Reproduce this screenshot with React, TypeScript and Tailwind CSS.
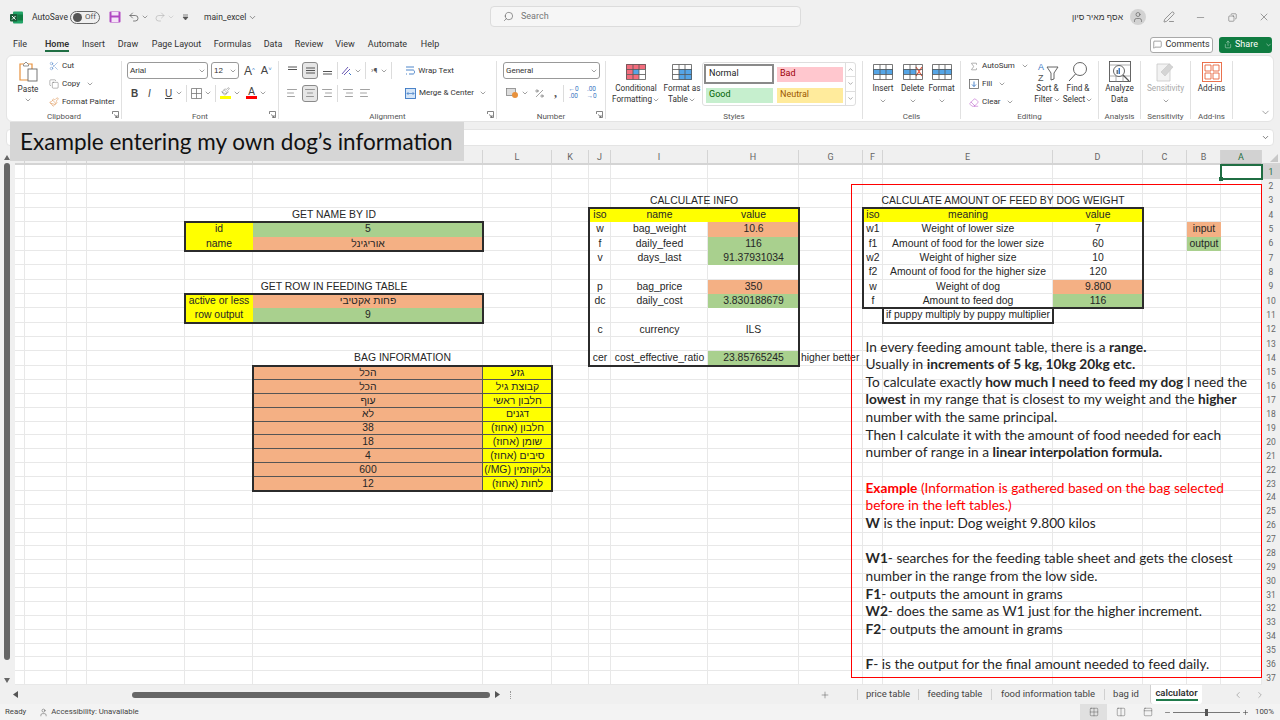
import React from 'react'
import {
  ChevronDown,
  ChevronLeft,
  ChevronRight,
  ChevronUp,
  Minus,
  X,
  Search,
  User,
  Scissors,
  Copy,
  Paintbrush,
  Undo2,
  Redo2,
  MessageSquare,
  Share,
  Plus,
  AlignLeft,
  AlignCenter,
  AlignRight,
  Sigma,
  Eraser,
  Percent,
  Grid2x2,
  Columns2,
  PanelTop,
  PenLine,
} from 'lucide-react'

const Chev = ({ className = '' }: { className?: string }) => (
  <ChevronDown size={8} strokeWidth={1.5} className={`text-[#444] shrink-0 ${className}`} />
)

const Sep = ({ className = '' }: { className?: string }) => (
  <div className={`w-px h-[17px] bg-[#dcdcdc] shrink-0 ${className}`} />
)

function Launcher() {
  return (
    <svg width="7" height="7" viewBox="0 0 7 7" className="absolute right-[3px] bottom-[3px] text-[#666]">
      <path d="M.5 3V.5H6.5V6.5H3.5M2 3.5L5 6M5 4V6H3" fill="none" stroke="currentColor" strokeWidth=".8" />
    </svg>
  )
}

function Group({
  w,
  label,
  launcher,
  children,
}: {
  w: string
  label: string
  launcher?: boolean
  children: React.ReactNode
}) {
  return (
    <div className={`relative flex flex-col shrink-0 h-full ${w}`}>
      <div className="flex-1 min-h-0 border-r border-[#e1e1e1] mb-[2px]">
        <div className="flex flex-col h-[50px] relative">{children}</div>
        <div className="text-center text-[8px] leading-[11px] text-[#555]">{label}</div>
      </div>
      {launcher && <Launcher />}
    </div>
  )
}

function BigBtn({
  w,
  icon,
  lines,
  chev,
  gray,
}: {
  w: string
  icon: React.ReactNode
  lines: string[]
  chev?: boolean
  gray?: boolean
}) {
  return (
    <div className={`flex flex-col items-center shrink-0 ${w} ${gray ? 'text-[#aaa]' : 'text-[#333]'}`}>
      <div className="h-[22px] flex items-center justify-center">{icon}</div>
      {lines.map((l, i) => (
        <div key={l} className="flex items-center leading-[11px] text-[8.2px] whitespace-nowrap">
          {l}
          {chev && i === lines.length - 1 && lines.length === 2 && <Chev />}
        </div>
      ))}
      {chev && lines.length === 1 && <Chev className="mt-[3px]" />}
    </div>
  )
}

const Vert = ({ ys, sel }: { ys: number[]; sel?: boolean }) => (
  <div className={`w-[16px] h-[17px] flex items-center justify-center shrink-0 rounded-[3px] ${sel ? 'border border-[#8a8a8a] bg-[#e6e6e6]' : ''}`}>
    <svg width="11" height="11" viewBox="0 0 11 11">
      {ys.map((y) => (
        <path key={y} d={`M1 ${y}H10`} stroke="#555" strokeWidth="1" />
      ))}
    </svg>
  </div>
)

const Horz = ({ Icon, sel }: { Icon: typeof AlignLeft; sel?: boolean }) => (
  <div className={`w-[16px] h-[17px] flex items-center justify-center shrink-0 rounded-[3px] ${sel ? 'border border-[#8a8a8a] bg-[#e6e6e6]' : ''}`}>
    <Icon size={12} strokeWidth={1} className="text-[#444]" />
  </div>
)

function TableIcon({ children }: { children?: React.ReactNode }) {
  return (
    <svg width="20" height="16" viewBox="0 0 20 16">
      {children}
      <path d="M.5.5H19.5V15.5H.5ZM.5 5.5H19.5M.5 10.5H19.5M7 .5V15.5M13 .5V15.5" fill="none" stroke="#555" strokeWidth=".8" />
    </svg>
  )
}

const cols = [10, 42.5, 20, 98, 68, 230, 69, 37, 22, 97, 91, 64, 20, 170, 90, 44, 34, 41]
const colNames = ['R', 'Q', 'P', 'O', 'N', 'M', 'L', 'K', 'J', 'I', 'H', 'G', 'F', 'E', 'D', 'C', 'B', 'A']
const rowNums = Array.from({ length: 37 }, (_, i) => i + 1)

const yellow = 'bg-[#ffff00]'
const orange = 'bg-[#f4b084]'
const green = 'bg-[#a9d08e]'

// c and r are 1-based sheet positions, the header row takes grid line 1
function Cell({
  c,
  r,
  span = 1,
  bg = '',
  children,
  dir,
}: {
  c: number
  r: number
  span?: number
  bg?: string
  children?: React.ReactNode
  dir?: 'rtl'
}) {
  return (
    <div
      dir={dir}
      className={`flex items-center justify-center whitespace-nowrap font-['Liberation_Sans',sans-serif] text-[10.4px] leading-none text-[#262626] ${bg}`}
      style={{ gridColumn: `${c} / span ${span}`, gridRow: r + 1 }}
    >
      {children}
    </div>
  )
}

function Frame({ c, r, spanC, spanR }: { c: number; r: number; spanC: number; spanR: number }) {
  return (
    <div
      className="border-2 border-[#2b2b2b] -m-px pointer-events-none z-10"
      style={{ gridColumn: `${c} / span ${spanC}`, gridRow: `${r + 1} / span ${spanR}` }}
    />
  )
}

const bagRows: [string, string][] = [
  ['הכל', 'גזע'],
  ['הכל', 'קבוצת גיל'],
  ['עוף', 'חלבון ראשי'],
  ['לא', 'דגנים'],
  ['38', 'חלבון (אחוז)'],
  ['18', 'שומן (אחוז)'],
  ['4', 'סיבים (אחוז)'],
  ['600', 'גלוקוזמין (MG/)'],
  ['12', 'לחות (אחוז)'],
]

const infoRows: [number, string, string, string, string][] = [
  [5, 'w', 'bag_weight', '10.6', orange],
  [6, 'f', 'daily_feed', '116', green],
  [7, 'v', 'days_last', '91.37931034', green],
  [9, 'p', 'bag_price', '350', orange],
  [10, 'dc', 'daily_cost', '3.830188679', green],
  [12, 'c', 'currency', 'ILS', ''],
  [14, 'cer', 'cost_effective_ratio', '23.85765245', green],
]

const feedRows: [number, string, string, string, string][] = [
  [5, 'w1', 'Weight of lower size', '7', ''],
  [6, 'f1', 'Amount of food for the lower size', '60', ''],
  [7, 'w2', 'Weight of higher size', '10', ''],
  [8, 'f2', 'Amount of food for the higher size', '120', ''],
  [9, 'w', 'Weight of dog', '9.800', orange],
  [10, 'f', 'Amount to feed dog', '116', green],
]

function Sheet() {
  return (
    <div className="grid grid-cols-[10px_42.5px_20px_98px_68px_230px_69px_37px_22px_97px_91px_64px_20px_170px_90px_44px_34px_41px_18px] grid-rows-[15px_repeat(15,14.33px)_repeat(22,13.88px)] flex-1 relative">
      {colNames.map((n, i) => (
        <div
          key={n}
          className={`flex items-center justify-center pt-[2px] text-[9px] leading-none border-b-2 border-r border-[#d4d4d4] ${n === 'A' ? 'bg-[#d2d2d2] text-[#1f6e43] border-b-[#b5b5b5]' : 'text-[#666]'}`}
          style={{ gridColumn: i + 1, gridRow: 1 }}
        >
          {n}
        </div>
      ))}
      <div className="border-b-2 border-[#d4d4d4] flex items-end justify-end pr-[2px]" style={{ gridColumn: 19, gridRow: 1 }}>
        <div className="w-0 h-0 border-l-[8px] border-l-transparent border-b-[8px] border-b-[#c8c8c8] mb-[1px]" />
      </div>
      {rowNums.map((r) =>
        cols.map((_, c) => (
          <div key={`${r}-${c}`} className="border-r border-b border-[#e8e8e8] bg-white" style={{ gridColumn: c + 1, gridRow: r + 1 }} />
        )),
      )}
      {rowNums.map((r) => (
        <div
          key={r}
          className={`flex items-center justify-center text-[8.5px] ${r === 1 ? 'bg-[#d2d2d2] text-[#1f6e43]' : 'text-[#666]'}`}
          style={{ gridColumn: 19, gridRow: r + 1 }}
        >
          {r}
        </div>
      ))}

      <Cell c={5} r={4} span={2}>GET NAME BY ID</Cell>
      <Cell c={5} r={5} bg={yellow}>id</Cell>
      <Cell c={6} r={5} bg={green}>5</Cell>
      <Cell c={5} r={6} bg={yellow}>name</Cell>
      <Cell c={6} r={6} bg={orange} dir="rtl">אוריגינל</Cell>
      <Frame c={5} r={5} spanC={2} spanR={2} />

      <Cell c={5} r={9} span={2}>GET ROW IN FEEDING TABLE</Cell>
      <Cell c={5} r={10} bg={yellow}>active or less</Cell>
      <Cell c={6} r={10} bg={orange} dir="rtl">פחות אקטיבי</Cell>
      <Cell c={5} r={11} bg={yellow}>row output</Cell>
      <Cell c={6} r={11} bg={green}>9</Cell>
      <Frame c={5} r={10} spanC={2} spanR={2} />

      <Cell c={6} r={14} span={2}>BAG INFORMATION</Cell>
      {bagRows.map(([v, k], i) => (
        <React.Fragment key={k}>
          <Cell c={6} r={15 + i} bg={orange} dir="rtl">{v}</Cell>
          <Cell c={7} r={15 + i} bg={yellow} dir="rtl">{k}</Cell>
          <div className="border-b border-[#555]" style={{ gridColumn: '6 / span 2', gridRow: 16 + i }} />
        </React.Fragment>
      ))}
      <div className="border-r border-[#555]" style={{ gridColumn: 6, gridRow: '16 / span 9' }} />
      <Frame c={6} r={15} spanC={2} spanR={9} />

      <Cell c={9} r={3} span={3}>CALCULATE INFO</Cell>
      <Cell c={9} r={4} bg={yellow}>iso</Cell>
      <Cell c={10} r={4} bg={yellow}>name</Cell>
      <Cell c={11} r={4} bg={yellow}>value</Cell>
      {infoRows.map(([r, iso, name, val, bg]) => (
        <React.Fragment key={name}>
          <Cell c={9} r={r}>{iso}</Cell>
          <Cell c={10} r={r}>{name}</Cell>
          <Cell c={11} r={r} bg={bg}>{val}</Cell>
        </React.Fragment>
      ))}
      <Frame c={9} r={4} spanC={3} spanR={11} />
      <Cell c={12} r={14} span={2}>
        <span className="w-full pl-[2px]">higher better</span>
      </Cell>

      <Cell c={13} r={3} span={3}>CALCULATE AMOUNT OF FEED BY DOG WEIGHT</Cell>
      <Cell c={13} r={4} bg={yellow}>iso</Cell>
      <Cell c={14} r={4} bg={yellow}>meaning</Cell>
      <Cell c={15} r={4} bg={yellow}>value</Cell>
      {feedRows.map(([r, iso, m, val, bg]) => (
        <React.Fragment key={m}>
          <Cell c={13} r={r}>{iso}</Cell>
          <Cell c={14} r={r}>{m}</Cell>
          <Cell c={15} r={r} bg={bg}>{val}</Cell>
        </React.Fragment>
      ))}
      <Frame c={13} r={4} spanC={3} spanR={7} />
      <Cell c={14} r={11}>if puppy multiply by puppy multiplier</Cell>
      <Frame c={14} r={11} spanC={1} spanR={1} />

      <Cell c={17} r={5} bg={orange}>input</Cell>
      <Cell c={17} r={6} bg={green}>output</Cell>

      <div className="border-2 border-[#1f6e43] -m-px relative z-10" style={{ gridColumn: 18, gridRow: 2 }}>
        <div className="absolute -left-[3px] -bottom-[3px] w-[4px] h-[4px] bg-[#1f6e43]" />
      </div>
    </div>
  )
}

const B = ({ children }: { children: React.ReactNode }) => <b className="font-bold">{children}</b>

function Notes() {
  return (
    <div className="absolute left-[850.5px] top-[184px] w-[411px] h-[493.5px] border border-[#ff0000] pl-[14px] pt-[152.5px] font-['Lato',sans-serif] text-[13.7px] leading-[17.65px] text-[#262626] whitespace-nowrap z-20">
      <div>In every feeding amount table, there is a <B>range.</B></div>
      <div>Usually in <B>increments of 5 kg, 10kg 20kg etc.</B></div>
      <div>To calculate exactly <B>how much I need to feed my dog</B> I need the</div>
      <div><B>lowest</B> in my range that is closest to my weight and the <B>higher</B></div>
      <div>number with the same principal.</div>
      <div>Then I calculate it with the amount of food needed for each</div>
      <div>number of range in a <B>linear interpolation formula.</B></div>
      <div className="h-[17.65px]" />
      <div className="text-[#ff0000]"><B>Example</B> (Information is gathered based on the bag selected</div>
      <div className="text-[#ff0000]">before in the left tables.)</div>
      <div><B>W</B> is the input: Dog weight 9.800 kilos</div>
      <div className="h-[17.65px]" />
      <div><B>W1</B>- searches for the feeding table sheet and gets the closest</div>
      <div>number in the range from the low side.</div>
      <div><B>F1</B>- outputs the amount in grams</div>
      <div><B>W2</B>- does the same as W1 just for the higher increment.</div>
      <div><B>F2</B>- outputs the amount in grams</div>
      <div className="h-[17.65px]" />
      <div><B>F</B>- is the output for the final amount needed to feed daily.</div>
    </div>
  )
}

const menus = [
  ['File', 'w-[12px] mr-[5px]'],
  ['Home', 'w-[24px]'],
  ['Insert', 'w-[21px]'],
  ['Draw', 'w-[20px]'],
  ['Page Layout', 'w-[47px] ml-[1px]'],
  ['Formulas', 'w-[35px] ml-[1px]'],
  ['Data', 'w-[18px]'],
  ['Review', 'w-[26px]'],
  ['View', 'w-[18px]'],
  ['Automate', 'w-[37px] ml-[1px]'],
  ['Help', 'w-[18px] ml-[1px]'],
]

function TitleBar() {
  return (
    <div className="h-[34px] flex items-center text-[8.5px] text-[#333] shrink-0 relative">
      <svg width="13" height="13" viewBox="0 0 13 13" className="ml-[10px]">
        <rect x="3" y="0.5" width="10" height="12" rx="1" fill="#21a366" />
        <rect x="8" y="3.5" width="5" height="6" fill="#107c41" />
        <rect x="0" y="3" width="7.5" height="7.5" rx="1" fill="#185c37" />
        <path d="M2 5L5.5 8.6M5.5 5L2 8.6" stroke="#fff" strokeWidth="1" />
      </svg>
      <span className="ml-[9px] w-[34px] whitespace-nowrap">AutoSave</span>
      <div className="ml-[4px] w-[30px] h-[13px] rounded-full border border-[#666] flex items-center pl-[2px] gap-[3px]">
        <div className="w-[9px] h-[9px] rounded-full bg-[#555]" />
        <span className="text-[8px] leading-none text-[#555]">Off</span>
      </div>
      <svg width="12" height="12" viewBox="0 0 12 12" className="ml-[9px]">
        <rect x=".5" y=".5" width="11" height="11" rx="1" fill="#b146c2" />
        <rect x="2.5" y="1" width="7" height="3.5" fill="#f4e3f7" />
        <rect x="2.5" y="6.5" width="7" height="4.5" fill="#f4e3f7" />
      </svg>
      <Undo2 size={12} strokeWidth={1.3} className="ml-[7px] text-[#444]" />
      <Chev className="ml-[1px]" />
      <Redo2 size={12} strokeWidth={1.3} className="ml-[5px] text-[#b5b5b5]" />
      <ChevronDown size={8} strokeWidth={1.5} className="ml-[1px] text-[#bbb]" />
      <svg width="7" height="7" viewBox="0 0 7 7" className="ml-[7px]">
        <path d="M1 1H6M1 3L3.5 6L6 3Z" fill="#555" stroke="#555" strokeWidth=".7" />
      </svg>
      <span className="ml-[15px] whitespace-nowrap">main_excel</span>
      <ChevronDown size={9} strokeWidth={1.5} className="ml-[2px] text-[#444]" />
      <div className="absolute left-[490px] top-[6px] w-[311px] h-[21px] rounded-[4px] bg-[#f6f6f6] border border-[#dcdcdc] flex items-center pl-[12px] gap-[7px] text-[9px] text-[#777]">
        <Search size={11} strokeWidth={1.3} className="text-[#555] -scale-x-100" />
        Search
      </div>
      <div className="ml-auto flex items-center">
        <span dir="rtl" className="font-['Liberation_Sans',sans-serif] text-[8.5px] whitespace-nowrap">אסף מאיר סיון</span>
        <div className="ml-[7px] w-[16px] h-[16px] rounded-full bg-[#d2d2d2] flex items-center justify-center">
          <User size={12} strokeWidth={1.2} className="text-[#555]" />
        </div>
        <PenLine size={12} strokeWidth={1.2} className="ml-[17px] text-[#555]" />
        <Minus size={11} strokeWidth={1} className="ml-[20px] text-[#444]" />
        <Copy size={9} strokeWidth={1.2} className="ml-[22px] text-[#444] -scale-x-100" />
        <X size={12} strokeWidth={1} className="ml-[21px] mr-[10px] text-[#444]" />
      </div>
    </div>
  )
}

function MenuBar() {
  return (
    <div className="h-[21px] flex items-center text-[9px] text-[#333] shrink-0 pl-[14px] gap-[14px]">
      {menus.map(([m, cls]) => (
        <div key={m} className={`relative flex justify-center whitespace-nowrap shrink-0 ${cls} ${m === 'Home' ? 'font-semibold' : ''}`}>
          {m}
          {m === 'Home' && <div className="absolute left-0 right-0 top-[12px] h-[2px] bg-[#1f6e43]" />}
        </div>
      ))}
      <div className="ml-auto flex items-center gap-[6px] pr-[8px]">
        <div className="w-[63px] h-[16px] bg-white border border-[#a9a9a9] rounded-[3px] flex items-center justify-center gap-[3px]">
          <MessageSquare size={9} strokeWidth={1.2} />
          Comments
        </div>
        <div className="w-[53px] h-[16px] bg-[#107c41] rounded-[3px] flex items-center pl-[5px] gap-[3px] text-white">
          <Share size={9} strokeWidth={1.2} />
          Share
          <ChevronDown size={8} strokeWidth={1.5} className="ml-[4px]" />
        </div>
      </div>
    </div>
  )
}

function SmallRow({ icon, text, chev }: { icon: React.ReactNode; text: string; chev?: boolean }) {
  return (
    <div className="flex items-center gap-[3px] h-[18px] text-[8px] text-[#333] whitespace-nowrap">
      <span className="w-[10px] flex justify-center">{icon}</span>
      {text}
      {chev && <Chev className="ml-[3px]" />}
    </div>
  )
}

function Ribbon() {
  return (
    <div className="mx-[6px] h-[67px] bg-white rounded-[6px] border border-[#e4e4e4] flex shrink-0 relative pt-[5px]">
      <Group w="w-[115px]" label="Clipboard" launcher>
        <div className="flex pl-[8px] h-full">
          <div className="w-[26px] flex flex-col items-center text-[8.2px] text-[#333]">
            <svg width="19" height="21" viewBox="0 0 19 21">
              <path d="M1 3H13V19H1Z" fill="#fff" stroke="#e8913c" strokeWidth="1.2" />
              <path d="M4.5 3.5L7 1L9.5 3.5V5H4.5Z" fill="#fff" stroke="#777" strokeWidth=".8" />
              <rect x="9" y="8" width="9" height="12" fill="#fff" stroke="#666" strokeWidth=".9" />
            </svg>
            <span className="mt-[2px] leading-[11px]">Paste</span>
            <Chev className="mt-[1px]" />
          </div>
          <div className="ml-[8px] flex flex-col -mt-[4px]">
            <SmallRow icon={<Scissors size={10} strokeWidth={1} className="text-[#3b78c4]" />} text="Cut" />
            <SmallRow icon={<Copy size={10} strokeWidth={1} className="text-[#555]" />} text="Copy" chev />
            <SmallRow icon={<Paintbrush size={10} strokeWidth={1.2} className="text-[#d9853b]" />} text="Format Painter" />
          </div>
        </div>
      </Group>

      <Group w="w-[157px]" label="Font" launcher>
        <div className="flex items-center pl-[5px] h-[19px] font-['Liberation_Sans',sans-serif] text-[8px] text-[#333]">
          <div className="w-[81px] h-[17px] border border-[#999] rounded-[3px] flex items-center pl-[2px]">
            Arial
            <Chev className="ml-auto mr-[1px]" />
          </div>
          <div className="ml-[3px] w-[28px] h-[17px] border border-[#999] rounded-[3px] flex items-center pl-[2px]">
            12
            <Chev className="ml-auto mr-[1px]" />
          </div>
          <span className="ml-[5px] text-[12px] text-[#444]">A<sup className="text-[6px] text-[#3b78c4]">^</sup></span>
          <span className="ml-[6px] text-[11px] text-[#444]">A<sup className="text-[6px] text-[#3b78c4]">˅</sup></span>
        </div>
        <div className="flex items-center h-[20px] mt-[3px] pl-[9px] text-[10px] text-[#444] font-['Liberation_Sans',sans-serif]">
          <b className="w-[8px]">B</b>
          <i className="ml-[9px] w-[8px]">I</i>
          <span className="ml-[9px] underline w-[8px]">U</span>
          <Chev className="ml-[2px]" />
          <Sep className="ml-[3px]" />
          <svg width="11" height="11" viewBox="0 0 11 11" className="ml-[4px]">
            <path d="M.5.5H10.5V10.5H.5ZM5.5.5V10.5M.5 5.5H10.5" fill="none" stroke="#777" strokeWidth=".8" />
          </svg>
          <Chev className="ml-[2px]" />
          <Sep className="ml-[3px]" />
          <div className="ml-[4px] flex flex-col items-center w-[11px]">
            <Paintbrush size={9} strokeWidth={1.1} className="text-[#555]" />
            <div className="w-[11px] h-[3px] bg-[#ffff00]" />
          </div>
          <Chev className="ml-[2px]" />
          <div className="ml-[5px] flex flex-col items-center w-[11px] leading-[9px] text-[10px]">
            A
            <div className="w-[11px] h-[3px] bg-[#ff0000]" />
          </div>
          <Chev className="ml-[2px]" />
        </div>
      </Group>

      <Group w="w-[218px]" label="Alignment" launcher>
        <div className="flex items-center h-[19px] pl-[5px] text-[8px] text-[#333]">
          <Vert ys={[2, 4.5]} />
          <div className="ml-[2px]"><Vert ys={[3, 5.5, 8]} sel /></div>
          <div className="ml-[1px]"><Vert ys={[6.5, 9]} /></div>
          <Sep className="ml-[2px]" />
          <svg width="11" height="11" viewBox="0 0 11 11" className="ml-[3px]">
            <path d="M1 9L7 2M3 10L9 4" stroke="#6d5bb5" strokeWidth="1" />
            <path d="M8 8L10 10" stroke="#3b78c4" strokeWidth="1" />
          </svg>
          <Chev className="ml-[2px]" />
          <Sep className="ml-[3px]" />
          <span className="ml-[5px] text-[8px] text-[#555]">›¶</span>
          <Chev className="ml-[3px]" />
          <Sep className="ml-[3px]" />
          <svg width="10" height="11" viewBox="0 0 10 11" className="ml-[13px]">
            <path d="M1 2H9M1 5H8C10 5 10 9 8 9H4M1 9H2" fill="none" stroke="#3b78c4" strokeWidth=".9" />
          </svg>
          <span className="ml-[3px] whitespace-nowrap">Wrap Text</span>
        </div>
        <div className="flex items-center h-[20px] mt-[3px] pl-[5px] text-[8px] text-[#333]">
          <Horz Icon={AlignLeft} />
          <div className="ml-[2px]"><Horz Icon={AlignCenter} sel /></div>
          <div className="ml-[1px]"><Horz Icon={AlignRight} /></div>
          <Sep className="ml-[2px]" />
          <div className="ml-[2px]"><Horz Icon={AlignRight} /></div>
          <div className="ml-[1px]"><Horz Icon={AlignLeft} /></div>
          <svg width="11" height="11" viewBox="0 0 11 11" className="ml-[32px]">
            <rect x=".5" y=".5" width="10" height="10" fill="#d6e6f7" stroke="#3b78c4" strokeWidth=".9" />
            <path d="M2 5.5H9M2 5.5L3.5 4M2 5.5L3.5 7M9 5.5L7.5 4M9 5.5L7.5 7" fill="none" stroke="#3b78c4" strokeWidth=".7" />
          </svg>
          <span className="ml-[3px] whitespace-nowrap">Merge &amp; Center</span>
          <Chev className="ml-[5px]" />
        </div>
      </Group>

      <Group w="w-[109px]" label="Number" launcher>
        <div className="h-[19px] pl-[6px] flex items-center">
          <div className="w-[97px] h-[17px] border border-[#999] rounded-[3px] flex items-center pl-[2px] text-[8px] text-[#333]">
            General
            <Chev className="ml-auto mr-[1px]" />
          </div>
        </div>
        <div className="flex items-center h-[20px] mt-[3px] pl-[9px] text-[#555]">
          <svg width="12" height="10" viewBox="0 0 12 10">
            <rect x=".5" y=".5" width="9" height="7" fill="#ddd" stroke="#777" strokeWidth=".7" />
            <circle cx="9" cy="7" r="3" fill="#e8913c" />
          </svg>
          <Chev className="ml-[3px]" />
          <Percent size={11} strokeWidth={1.2} className="ml-[5px]" />
          <span className="ml-[9px] font-bold text-[12px] leading-none font-['Liberation_Serif',serif]">,</span>
          <Sep className="ml-[6px]" />
          <span className="ml-[2px] w-[15px] text-center text-[6.5px] leading-[7px] text-[#3b78c4]">←0<br />.00</span>
          <span className="ml-[3px] w-[15px] text-center text-[6.5px] leading-[7px] text-[#3b78c4]">.00<br />→0</span>
        </div>
      </Group>

      <Group w="w-[257px]" label="Styles">
        <div className="flex h-full pl-[4px]">
          <BigBtn
            w="w-[52px]"
            lines={['Conditional', 'Formatting']}
            chev
            icon={
              <TableIcon>
                <rect x="0" y="0" width="20" height="5" fill="#f26d7d" />
                <rect x="0" y="5" width="7" height="5.5" fill="#f26d7d" />
                <rect x="7" y="5" width="6" height="5.5" fill="#55a5e6" />
                <rect x="0" y="10.5" width="13" height="5" fill="#f26d7d" />
              </TableIcon>
            }
          />
          <BigBtn
            w="w-[40px]"
            lines={['Format as', 'Table']}
            chev
            icon={
              <TableIcon>
                <rect x="7" y="5" width="13" height="11" fill="#55a5e6" />
              </TableIcon>
            }
          />
          <div className="mt-[1px] w-[154px] h-[44px] border border-[#dedede] rounded-[3px] flex text-[9px]">
            <div className="grid grid-cols-[70px_66px] grid-rows-[22px_20px] gap-x-[3px] items-center pl-[1px]">
              <div className="h-[20px] border-2 border-[#8a8a8a] bg-white flex items-center pl-[3px] text-[#222]">Normal</div>
              <div className="h-[15px] bg-[#ffc7ce] flex items-center pl-[3px] text-[#9c0006]">Bad</div>
              <div className="h-[15px] bg-[#c6efce] flex items-center pl-[3px] text-[#006100] ml-[2px] w-[67px]">Good</div>
              <div className="h-[15px] bg-[#ffeb9c] flex items-center pl-[3px] text-[#9c5700]">Neutral</div>
            </div>
            <div className="ml-auto w-[10px] flex flex-col border-l border-[#dedede] text-[#777]">
              <div className="flex-1 flex items-center justify-center border-b border-[#dedede]"><ChevronUp size={7} /></div>
              <div className="flex-1 flex items-center justify-center border-b border-[#dedede]"><ChevronDown size={7} /></div>
              <div className="flex-1 flex items-center justify-center"><ChevronDown size={7} /></div>
            </div>
          </div>
        </div>
      </Group>

      <Group w="w-[98px]" label="Cells">
        <div className="flex h-full pl-[5px]">
          <BigBtn
            w="w-[30px]"
            lines={['Insert']}
            chev
            icon={
              <TableIcon>
                <rect x="0" y="5" width="20" height="5.5" fill="#55a5e6" />
              </TableIcon>
            }
          />
          <BigBtn
            w="w-[29px]"
            lines={['Delete']}
            chev
            icon={
              <TableIcon>
                <rect x="0" y="5" width="13" height="5.5" fill="#55a5e6" />
                <path d="M13 3L19 12M19 3L13 12" stroke="#e8563c" strokeWidth="1.2" />
              </TableIcon>
            }
          />
          <BigBtn
            w="w-[29px]"
            lines={['Format']}
            chev
            icon={
              <TableIcon>
                <rect x="0" y="5" width="20" height="5.5" fill="#55a5e6" />
              </TableIcon>
            }
          />
        </div>
      </Group>

      <Group w="w-[138px]" label="Editing">
        <div className="flex h-full pl-[8px]">
          <div className="flex flex-col -mt-[4px] w-[64px]">
            <SmallRow icon={<Sigma size={11} strokeWidth={1.1} className="text-[#555]" />} text="AutoSum" chev />
            <SmallRow
              icon={
                <svg width="10" height="10" viewBox="0 0 10 10">
                  <rect x=".5" y=".5" width="9" height="9" fill="#fff" stroke="#666" strokeWidth=".8" />
                  <path d="M5 2.5V7.5M3 5.5L5 7.5L7 5.5" fill="none" stroke="#3b78c4" strokeWidth=".9" />
                </svg>
              }
              text="Fill"
              chev
            />
            <SmallRow icon={<Eraser size={11} strokeWidth={1.2} className="text-[#b146c2]" />} text="Clear" chev />
          </div>
          <BigBtn
            w="w-[29px]"
            lines={['Sort &', 'Filter']}
            chev
            icon={
              <svg width="22" height="22" viewBox="0 0 22 22">
                <text x="1" y="9" fontSize="9" fill="#3b78c4" fontFamily="Liberation Sans">A</text>
                <text x="1" y="20" fontSize="9" fill="#555" fontFamily="Liberation Sans">Z</text>
                <path d="M10 6H21L17 12V18L14 19V12Z" fill="none" stroke="#555" strokeWidth=".9" />
              </svg>
            }
          />
          <BigBtn
            w="w-[32px]"
            lines={['Find &', 'Select']}
            chev
            icon={
              <svg width="22" height="22" viewBox="0 0 22 22">
                <circle cx="13" cy="8" r="6.5" fill="none" stroke="#555" strokeWidth=".9" />
                <path d="M8.5 13L2 20" stroke="#555" strokeWidth="1" />
              </svg>
            }
          />
        </div>
      </Group>

      <Group w="w-[42px]" label="Analysis">
        <BigBtn
          w="w-full"
          lines={['Analyze', 'Data']}
          icon={
            <svg width="22" height="22" viewBox="0 0 22 22">
              <rect x=".5" y=".5" width="21" height="20" fill="#fff" stroke="#555" strokeWidth=".9" />
              <path d="M.5 4H21.5M.5 15H21.5M7 15V21M14 15V21" stroke="#777" strokeWidth=".6" />
              <circle cx="10" cy="10" r="5.5" fill="#fff" stroke="#555" strokeWidth=".9" />
              <rect x="7.5" y="9" width="1.5" height="4" fill="#777" />
              <rect x="9.5" y="7" width="1.5" height="6" fill="#3b78c4" />
              <path d="M14 14L20 20" stroke="#555" strokeWidth="1.2" />
            </svg>
          }
        />
      </Group>

      <Group w="w-[50px]" label="Sensitivity">
        <BigBtn
          w="w-full"
          lines={['Sensitivity']}
          chev
          gray
          icon={
            <svg width="20" height="22" viewBox="0 0 20 22">
              <path d="M1 3H14V20H1Z" fill="#f2f2f2" stroke="#c8c8c8" strokeWidth=".8" />
              <path d="M5 11L13 3L17 6L9 15Z" fill="#d4d4d4" stroke="#c4c4c4" strokeWidth=".6" />
            </svg>
          }
        />
      </Group>

      <Group w="w-[42px]" label="Add-ins">
        <BigBtn
          w="w-full"
          lines={['Add-ins']}
          icon={
            <svg width="20" height="20" viewBox="0 0 20 20">
              <rect x=".5" y=".5" width="19" height="19" fill="none" stroke="#e8643c" strokeWidth=".9" />
              <path d="M3 3H9V9H3ZM11 3H17V9H11ZM3 11H9V17H3ZM11 11H17V17H11Z" fill="none" stroke="#e8643c" strokeWidth=".9" />
            </svg>
          }
        />
      </Group>

      <ChevronDown size={11} strokeWidth={1.2} className="absolute right-[2px] bottom-[3px] text-[#555]" />
    </div>
  )
}

const tabs = [
  ['price table', 'w-[61px]'],
  ['feeding table', 'w-[73px]'],
  ['food information table', 'w-[113px]'],
  ['bag id', 'w-[43px]'],
]

function Bottom() {
  return (
    <>
      <div className="h-[19px] flex items-center shrink-0 text-[9.5px] text-[#444]">
        <svg width="5" height="7" viewBox="0 0 5 7" className="ml-[13px] text-[#555]">
          <path d="M5 0V7L0 3.5Z" fill="currentColor" />
        </svg>
        <div className="ml-[114px] w-[358px] h-[6px] rounded-full bg-[#666]" />
        <svg width="5" height="7" viewBox="0 0 5 7" className="ml-[5px] text-[#555]">
          <path d="M0 0V7L5 3.5Z" fill="currentColor" />
        </svg>
        <div className="ml-[10px] h-[8px] border-l border-dotted border-[#999]" />
        <Plus size={10} strokeWidth={1.2} className="ml-[309px] text-[#555]" />
        <div className="ml-[27px] flex items-center h-full">
          {tabs.map(([t, w]) => (
            <div key={t} className={`h-[11px] flex items-center justify-center whitespace-nowrap border-l border-[#d0d0d0] ${w}`}>
              {t}
            </div>
          ))}
          <div className="ml-[3px] border-l border-[#d0d0d0] w-[52px] h-[19px] bg-white rounded-b-[3px] flex flex-col items-center font-semibold text-[#333]">
            <span className="mt-[1px] leading-[13px]">calculator</span>
            <div className="w-[42px] h-[2px] bg-[#1f7a4a]" />
          </div>
        </div>
        <ChevronLeft size={10} strokeWidth={1.2} className="ml-[31px] text-[#777]" />
        <ChevronRight size={10} strokeWidth={1.2} className="ml-[12px] text-[#777]" />
      </div>
      <div className="h-[16px] flex items-center shrink-0 bg-[#f3f3f3] text-[7.8px] text-[#444]">
        <span className="ml-[5px]">Ready</span>
        <User size={9} strokeWidth={1.2} className="ml-[13px]" />
        <span className="ml-[3px]">Accessibility: Unavailable</span>
        <div className="ml-auto flex items-center h-full">
          <div className="w-[27px] h-full bg-[#e0e0e0] flex items-center justify-center">
            <Grid2x2 size={10} strokeWidth={1} />
          </div>
          <div className="w-[27px] flex justify-center"><Columns2 size={10} strokeWidth={1} /></div>
          <div className="w-[27px] flex justify-center"><PanelTop size={10} strokeWidth={1} /></div>
          <Minus size={7} className="ml-[3px]" />
          <div className="relative ml-[2px] w-[67px] h-px bg-[#777] flex justify-center">
            <div className="absolute -top-[3px] w-[3px] h-[7px] bg-[#555]" />
          </div>
          <Plus size={7} className="ml-[2px]" />
          <span className="ml-[6px] mr-[7px] w-[18px] text-right">100%</span>
        </div>
      </div>
    </>
  )
}

export default function App() {
  return (
    <div className="w-[1280px] h-[720px] relative overflow-hidden flex flex-col bg-[#f0f0f0] font-['Roboto',sans-serif]">
      <TitleBar />
      <MenuBar />
      <Ribbon />
      <div className="h-[7px] shrink-0" />
      <div className="mx-[6px] h-[17px] bg-white rounded-[4px] border border-[#e4e4e4] shrink-0 flex items-center justify-end pr-[3px]">
        <ChevronDown size={9} className="text-[#555]" />
      </div>
      <div className="h-[4px] shrink-0" />
      <div className="flex flex-1 min-h-0">
        <div className="w-[14.5px] shrink-0 flex flex-col items-center">
          <div className="w-0 h-0 mt-[5px] border-x-[3px] border-x-transparent border-b-[5px] border-b-[#666]" />
          <div className="mt-[3px] w-[6px] h-[497px] rounded-full bg-[#666]" />
          <div className="w-0 h-0 mt-auto mb-[2px] border-x-[3px] border-x-transparent border-t-[5px] border-t-[#666]" />
        </div>
        <Sheet />
      </div>
      <Bottom />

      <div className="absolute left-[10px] top-[122px] w-[454px] h-[39px] bg-[#d6d6d6] flex items-center pl-[10px] font-['Lato',sans-serif] text-[22.5px] text-[#111] whitespace-nowrap z-30">
        Example entering my own dog’s information
      </div>
      <Notes />
    </div>
  )
}
